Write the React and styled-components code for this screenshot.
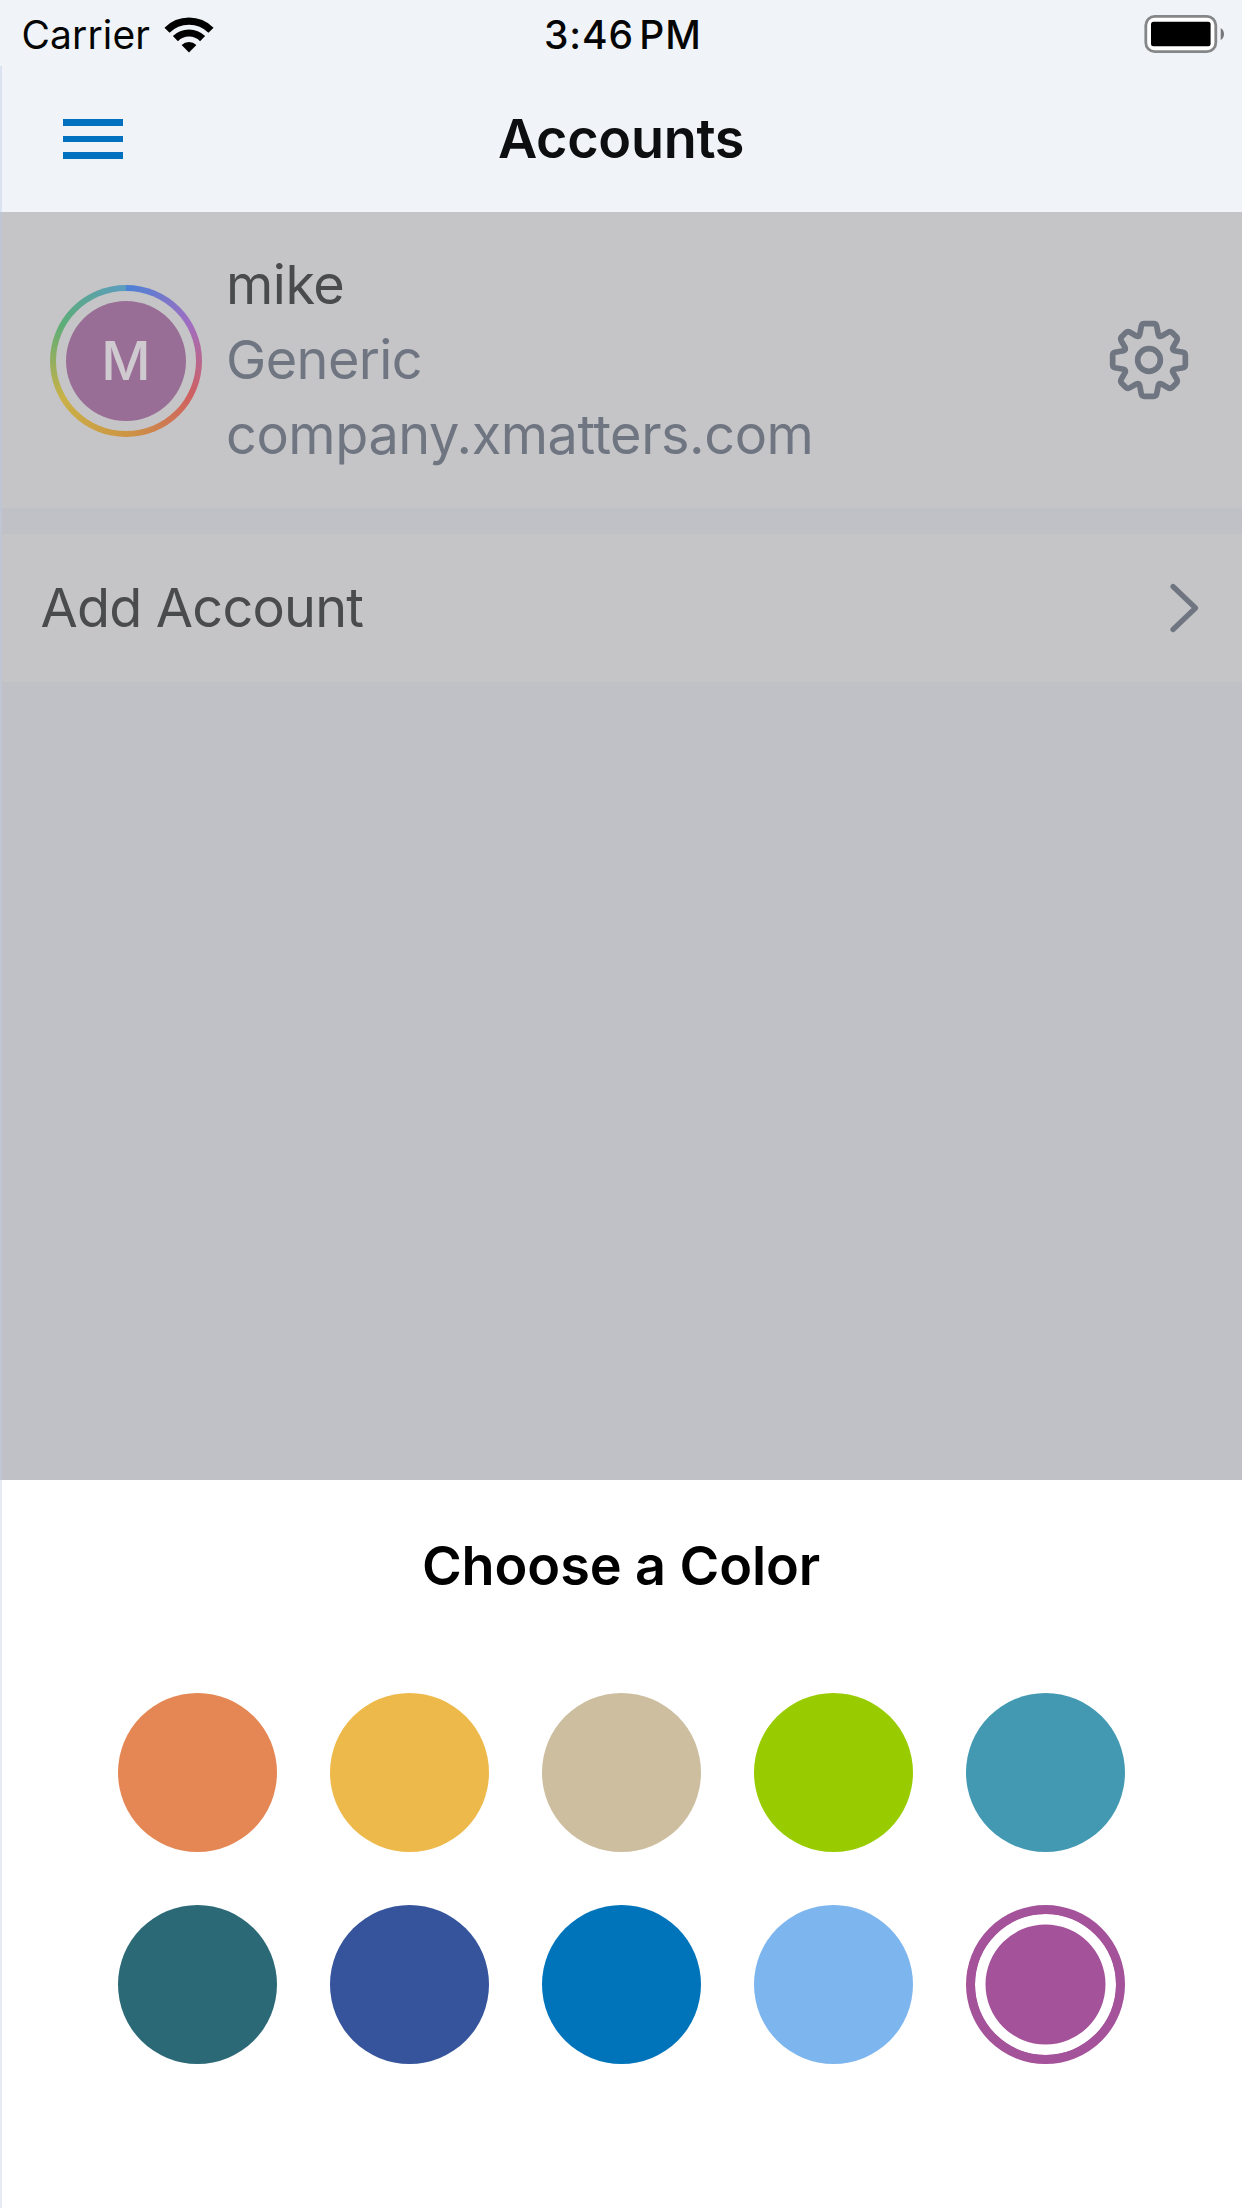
import React from "react";
import styled, { createGlobalStyle } from "styled-components";

const GlobalStyle = createGlobalStyle`
  * { box-sizing: border-box; }
  body { margin: 0; background: #fff; }
`;

const Screen = styled.div`
  width: 1242px;
  height: 2208px;
  display: flex;
  flex-direction: column;
  overflow: hidden;
  background: #f0f4f8;
  font-family: Inter, "Liberation Sans", sans-serif;
`;

const StatusBar = styled.header`
  height: 66px;
  flex: none;
  display: grid;
  grid-template-columns: 1fr auto 1fr;
  align-items: center;
  padding: 0 18px 0 21.5px;
  color: #050505;
`;

const Carrier = styled.div`
  display: flex;
  align-items: center;
  gap: 14px;
`;

const StatusText = styled.span`
  padding-top: 2px;
  font-size: 39px;
  line-height: 66px;
  font-weight: ${(p) => p.$weight || 400};
  letter-spacing: ${(p) => p.$tracking || 0}px;
  word-spacing: ${(p) => p.$gap || 0}px;
  white-space: nowrap;
`;

const StatusRight = styled.div`
  display: flex;
  justify-content: flex-end;
`;

const NavBar = styled.nav`
  height: 146px;
  flex: none;
  display: grid;
  grid-template-columns: 120px 1fr 120px;
  align-items: center;
  padding: 0 63px 0 61px;
  border-left: 2px solid #dbe3f0;
`;

const MenuButton = styled.button`
  width: 60px;
  height: 40px;
  padding: 0;
  border: 0;
  background: none;
  display: flex;
  flex-direction: column;
  justify-content: space-between;
`;

const MenuBar = styled.span`
  height: 6.6px;
  background: #0070bf;
`;

const Title = styled.h1`
  margin: 0;
  font-size: 54px;
  line-height: 72px;
  font-weight: 600;
  letter-spacing: ${(p) => p.$tracking}px;
  text-align: center;
  color: ${(p) => p.$color || "#000"};
  white-space: nowrap;
`;

const Body = styled.main`
  height: 1267.5px;
  flex: none;
  display: flex;
  flex-direction: column;
  gap: 26px;
  background: #c0c1c6;
  border-left: 2px solid #bfc5d3;
`;

const Row = styled.section`
  height: ${(p) => p.$height}px;
  display: flex;
  align-items: center;
  justify-content: space-between;
  background: #c5c5c7;
  padding: ${(p) => p.$padding};
`;

const Identity = styled.div`
  display: flex;
  align-items: center;
  gap: 24px;
`;

const AvatarRing = styled.div`
  width: 152px;
  height: 152px;
  margin-top: 1px;
  border-radius: 50%;
  padding: 6px;
  background: conic-gradient(
    #4a82d6 0deg,
    #a06dc0 60deg,
    #cf6060 118deg,
    #cd9444 178deg,
    #c9b147 240deg,
    #5cad78 300deg,
    #5b9cc0 360deg
  );
`;

const AvatarGap = styled.div`
  width: 100%;
  height: 100%;
  border-radius: 50%;
  padding: 10px;
  background: #c5c5c7;
`;

const Avatar = styled.div`
  width: 100%;
  height: 100%;
  border-radius: 50%;
  background: #996e96;
  color: #cfcad0;
  font-size: 54px;
  font-weight: 550;
  line-height: 119px;
  text-align: center;
`;

const Lines = styled.div`
  display: flex;
  flex-direction: column;
  padding-bottom: 2px;
`;

const Line = styled.span`
  font-size: 54px;
  line-height: 75px;
  letter-spacing: ${(p) => p.$tracking}px;
  color: ${(p) => (p.$muted ? "#6f7682" : "#4a4b4c")};
  white-space: nowrap;
`;

const RowLabel = styled(Line)`
  padding-bottom: 2px;
`;

const Sheet = styled.section`
  flex: 1;
  display: flex;
  flex-direction: column;
  align-items: center;
  padding: 50px 2px 0 0;
  background: #fff;
  border-left: 2px solid #e6eaf3;
`;

const Swatches = styled.div`
  margin-top: 91px;
  display: grid;
  grid-template-columns: repeat(5, 159px);
  gap: 53px;
`;

const Swatch = styled.button`
  width: 159px;
  height: 159px;
  padding: 0;
  border-radius: 50%;
  border: ${(p) => (p.$selected ? 9.5 : 0)}px solid ${(p) => p.$color};
  background: ${(p) => p.$color};
  box-shadow: ${(p) => (p.$selected ? "inset 0 0 0 10.5px #fff" : "none")};
`;

const COLORS = [
  "#e48755", "#eeb94b", "#cdbe9f", "#99cc00", "#4399b2",
  "#2b6977", "#35549b", "#0074bb", "#7db5ee", "#a4529a",
];

const WifiIcon = () => (
  <svg width="50" height="38" viewBox="0 0 50 38">
    <path d="M25 37.5 L17.6 30 A10.6 10.6 0 0 1 32.4 30 Z" fill="#000" />
    <path d="M11.4 23.6 A19.3 19.3 0 0 1 38.6 23.6" fill="none" stroke="#000" strokeWidth="7.2" />
    <path d="M3 15.3 A31.2 31.2 0 0 1 47 15.3" fill="none" stroke="#000" strokeWidth="7.2" />
  </svg>
);

const BatteryIcon = () => (
  <svg width="80" height="40" viewBox="0 0 80 40">
    <rect x="1.8" y="2.3" width="70" height="35.4" rx="9" fill="#fff" stroke="#858688" strokeWidth="2.8" />
    <rect x="7" y="7.7" width="59.6" height="24.6" rx="2.5" fill="#000" />
    <path d="M76.7 14 Q80 16 80 20 Q80 24 76.7 26 Z" fill="#77787a" />
  </svg>
);

const GearIcon = () => (
  <svg width="80" height="80" viewBox="-120 -120 240 240" fill="none" stroke="#6f7682" strokeWidth="17" strokeLinejoin="round">
    <circle r="34" />
    {[0, 90, 180, 270].map((a) => (
      <path
        key={a}
        transform={`rotate(${a})`}
        d="M0 -109 H14 Q21 -109 23 -102 L28 -76 Q30 -68 38 -72 L57 -83 Q64 -87 70 -82 L82 -70 Q87 -64 83 -57 L72 -38 Q68 -30 76 -28 L102 -23 Q109 -21 109 -14 V0"
      />
    ))}
  </svg>
);

const ChevronIcon = () => (
  <svg width="30" height="52" viewBox="0 0 30 52" fill="none" stroke="#6f7682" strokeWidth="5.2" strokeLinecap="round" strokeLinejoin="round">
    <path d="M4 4.5 L26.5 26 L4 47.5" />
  </svg>
);

export default function App() {
  return (
    <Screen>
      <GlobalStyle />
      <StatusBar>
        <Carrier>
          <StatusText $tracking={0.1}>Carrier</StatusText>
          <WifiIcon />
        </Carrier>
        <StatusText $weight={550} $tracking={0.9} $gap={-6}>3:46 PM</StatusText>
        <StatusRight>
          <BatteryIcon />
        </StatusRight>
      </StatusBar>
      <NavBar>
        <MenuButton aria-label="Menu">
          <MenuBar />
          <MenuBar />
          <MenuBar />
        </MenuButton>
        <Title $tracking={-0.3} $color="#0c0e10">Accounts</Title>
      </NavBar>
      <Body>
        <Row $height={296} $padding="0 53px 0 48px">
          <Identity>
            <AvatarRing>
              <AvatarGap>
                <Avatar>M</Avatar>
              </AvatarGap>
            </AvatarRing>
            <Lines>
              <Line $tracking={-0.5}>mike</Line>
              <Line $muted $tracking={-0.6}>Generic</Line>
              <Line $muted $tracking={-0.43}>company.xmatters.com</Line>
            </Lines>
          </Identity>
          <GearIcon />
        </Row>
        <Row $height={148} $padding="0 43px 0 38.5px">
          <RowLabel $tracking={-0.8}>Add Account</RowLabel>
          <ChevronIcon />
        </Row>
      </Body>
      <Sheet>
        <Title as="h2" $tracking={-0.1}>Choose a Color</Title>
        <Swatches>
          {COLORS.map((color, i) => (
            <Swatch key={color} $color={color} $selected={i === COLORS.length - 1} aria-label={color} />
          ))}
        </Swatches>
      </Sheet>
    </Screen>
  );
}
